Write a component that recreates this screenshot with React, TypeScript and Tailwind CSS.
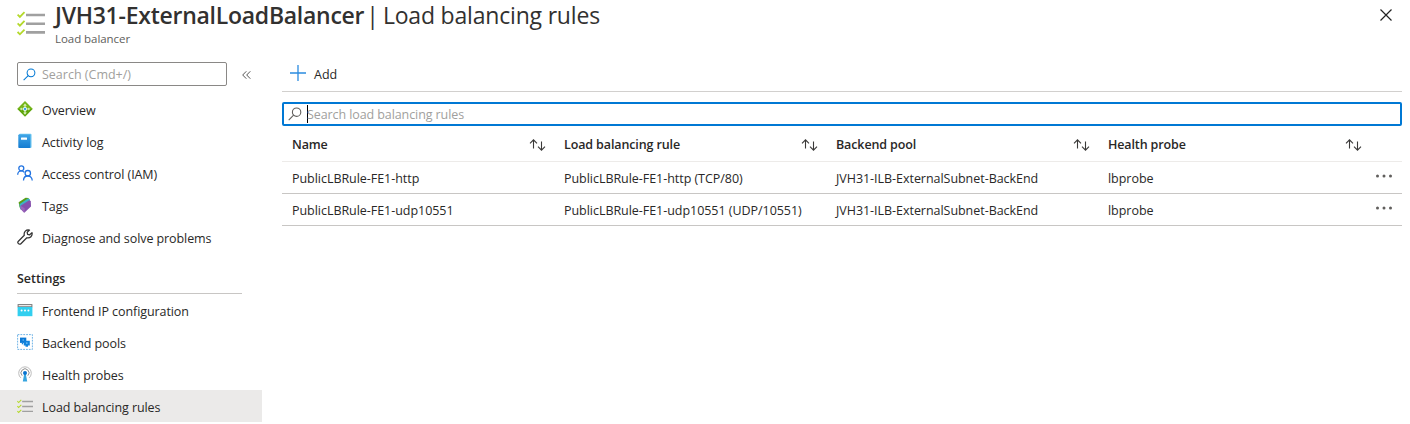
import React from "react";

type IconProps = { className?: string };

function RulesIcon({ className = "size-4" }: IconProps) {
  return (
    <svg className={className} viewBox="0 0 28 28" fill="none">
      <path d="M9 6h19M9 14.700h19M9 23.400h19" stroke="#a0a0a0" strokeWidth="2.600" />
      <path d="M.6 5.600l2.300 2.300L7.500 3.200M.6 14.300l2.300 2.300 4.600-4.700M.6 23l2.300 2.300 4.600-4.700" stroke="#b4d92b" strokeWidth="1.800" />
    </svg>
  );
}

function OverviewIcon() {
  return (
    <svg className="size-4" viewBox="0 0 16 16">
      <path d="M8 .3 15.700 8 8 15.700.3 8z" fill="#5ea50b" />
      <path d="M8 .3 15.700 8H.3z" fill="#76b71b" />
      <path d="M8 2.400 9.900 4.700H8.600v2h-1.200v-2H6.100zM2.800 8l1.900-1.500v1h2v1h-2v1zM13.200 8l-1.900-1.500v1h-2v1h2v1zM7.300 9h1.400v2.500h1.200L8 13.700l-1.900-2.200h1.200z" fill="#d8efb8" />
      <circle cx="8" cy="8" r="2.100" fill="#fff" />
      <circle cx="8" cy="8" r="1.300" fill="#3ea6e8" />
    </svg>
  );
}

function LogIcon() {
  return (
    <svg className="size-4" viewBox="0 0 16 16">
      <defs>
        <linearGradient id="log" x2="0" y2="1">
          <stop stopColor="#3fa5e7" />
          <stop offset="1" stopColor="#157cd1" />
        </linearGradient>
      </defs>
      <rect x="2" y=".7" width="12.500" height="14.300" rx="1" fill="#69c4ef" />
      <rect x="1.300" y="1.400" width="12" height="13.600" rx=".8" fill="url(#log)" />
      <rect x="4" y="4.600" width="6" height="2.200" rx=".3" fill="#fff" />
    </svg>
  );
}

function AccessIcon() {
  return (
    <svg className="size-4" viewBox="0 0 16 16" fill="none" stroke="#2374e1" strokeWidth="1.300">
      <circle cx="4.300" cy="3.300" r="2.500" />
      <path d="M.7 9.700c0-2.300 1.600-3.800 3.600-3.800 1.300 0 2.300.6 3 1.500" />
      <circle cx="10.800" cy="8.200" r="2.700" />
      <path d="M6.500 15.500c0-2.600 1.800-4.500 4.300-4.500s4.400 1.900 4.400 4.500" />
    </svg>
  );
}

function TagIcon() {
  return (
    <svg className="size-4" viewBox="0 0 16 16">
      <path d="M1.600 5.300 8.600.7l3 .4.400 5-7 5-2.400-.6z" fill="#5a9e16" />
      <path d="m2.400 7.300 8.400-5.700 2 .5.200 6-7 5.400-2.800-1.300z" fill="#3cb4c4" />
      <path d="m3.600 8.800 8.600-5.600 1.600.8.200 5.600-6.400 5.900-.9-.2-3-3.300z" fill="#8650ad" />
      <path d="m3.600 8.800 4 2.400v4.300l-.9-.2-3-3.300z" fill="#9b65bb" />
    </svg>
  );
}

function WrenchIcon() {
  return (
    <svg className="size-4" viewBox="0 0 16 16" fill="none" stroke="#333" strokeWidth="1.250" strokeLinejoin="round">
      <path d="M12.500 1 10.200 3.300l.4 2 2.100.5L15 3.600c.8 3.300-1.900 6-5.200 5.200L3.900 14.700c-1.600 1.600-4.100-.9-2.500-2.500L7.300 6.300C6.500 3 9.100.2 12.500 1z" />
    </svg>
  );
}

function FrontendIcon() {
  return (
    <svg className="size-4" viewBox="0 0 16 16">
      <path d="M.6 2.100h14.800v3.200H.6z" fill="#777" />
      <path d="M1.600 3h12.800v1.300H1.600z" fill="#e9e9e9" />
      <path d="M.6 5h14.800v9.200H.6z" fill="#32cfef" />
      <g fill="#fff">
        <circle cx="4.600" cy="8.500" r="1" />
        <circle cx="8" cy="8.500" r="1" />
        <circle cx="11.400" cy="8.500" r="1" />
      </g>
    </svg>
  );
}

function PoolIcon() {
  return (
    <svg className="size-4" viewBox="0 0 16 16">
      <rect x=".6" y=".6" width="14.800" height="14.800" fill="#fff" stroke="#4a9fe0" strokeWidth=".8" strokeDasharray="1.800 1.050" />
      <path d="M3 3.600h6.300v5.300H3z" fill="#0b78d4" />
      <path d="M6.800 6.800h6v4.700h-6zM8.500 11.500H11v1.300H8.500z" fill="#1183dd" />
      <path d="M4.800 8.900h1.400v1.400H4.800z" fill="#1183dd" />
      <circle cx="6.200" cy="6" r=".8" fill="#6dbcf2" />
      <circle cx="9.800" cy="9.100" r=".9" fill="#6dbcf2" />
    </svg>
  );
}

function ProbeIcon() {
  return (
    <svg className="size-4" viewBox="0 0 16 16" fill="none">
      <path d="M4 12a6.300 6.300 0 1 1 8 0" stroke="#bdbdbd" strokeWidth="1" />
      <path d="M5.200 9.700a4 4 0 1 1 5.600 0" stroke="#8f8f8f" strokeWidth="1" />
      <path d="m7.200 8h1.600l1.400 7.400H5.800z" fill="#37a5df" />
      <circle cx="8" cy="7" r="2" fill="#0873cf" />
    </svg>
  );
}

function SearchIcon({ className }: IconProps) {
  return (
    <svg className={className} viewBox="0 0 14 14" fill="none" stroke="currentColor" strokeWidth="1.100">
      <circle cx="8.600" cy="5.200" r="4.200" />
      <path d="M5.600 8.200.7 13.100" />
    </svg>
  );
}

function SortIcon() {
  return (
    <svg className="h-3 w-[17px]" viewBox="0 0 17 12" fill="none" stroke="#3b3a39" strokeWidth="1.100">
      <path d="M4.500 9.500V.8M1 4.300 4.500.8 8 4.300M12.500 2.500v8.700M9 7.700l3.500 3.500L16 7.700" />
    </svg>
  );
}

function NavItem({ icon, label, active }: { icon: React.ReactNode; label: string; active?: boolean }) {
  return (
    <li className={active ? "flex h-8 items-center gap-[9px] bg-[#ebeae9] pl-[17px]" : "flex h-8 items-center gap-[9px] pl-[17px]"}>
      {icon}
      <span className="pt-[3px] tracking-[-0.08px]">{label}</span>
    </li>
  );
}

const columns = ["Name", "Load balancing rule", "Backend pool", "Health probe"];

const rows = [
  ["PublicLBRule-FE1-http", "PublicLBRule-FE1-http (TCP/80)", "JVH31-ILB-ExternalSubnet-BackEnd", "lbprobe"],
  ["PublicLBRule-FE1-udp10551", "PublicLBRule-FE1-udp10551 (UDP/10551)", "JVH31-ILB-ExternalSubnet-BackEnd", "lbprobe"],
];

export default function App() {
  return (
    <div className="h-[424px] w-[1410px] overflow-hidden bg-white font-['Open_Sans',sans-serif] text-[12.5px] leading-4 whitespace-nowrap text-[#292827]">
      <header className="flex h-[62px] items-start pl-[17px]">
        <RulesIcon className="mt-[9px] size-7" />
        <div className="ml-[10px]">
          <h1 className="flex h-[30px] items-center text-[23px] leading-[30px] text-[#323130]">
            <span className="font-semibold tracking-[-0.260px]">JVH31-ExternalLoadBalancer</span>
            <span className="ml-[2px]">|</span>
            <span className="ml-[4px] tracking-[-0.190px]">Load balancing rules</span>
          </h1>
          <p className="mt-px text-[11.5px] tracking-[-0.05px] text-[#605e5c]">Load balancer</p>
        </div>
        <svg className="mt-[9px] mr-[18px] ml-auto size-3" viewBox="0 0 12 12" stroke="#222" strokeWidth="1.200">
          <path d="m.5.5 11 11m0-11-11 11" />
        </svg>
      </header>
      <div className="flex">
        <aside className="w-[262px]">
          <div className="flex h-[31px] items-start pl-[17px]">
            <div className="flex h-6 w-[210px] items-center rounded-[2px] border border-[#8a8886] pl-[5px] text-[#a19f9d]">
              <SearchIcon className="size-[13px] text-[#0078d4]" />
              <span className="ml-[6px] pt-[2px]">Search (Cmd+/)</span>
            </div>
            <svg className="mt-[9px] ml-[15px] h-2 w-[9px]" viewBox="0 0 9 8" fill="none" stroke="#555" strokeWidth="1">
              <path d="M4.300.3.700 4l3.600 3.700M8.300.3 4.700 4l3.600 3.700" />
            </svg>
          </div>
          <ul>
            <NavItem icon={<OverviewIcon />} label="Overview" />
            <NavItem icon={<LogIcon />} label="Activity log" />
            <NavItem icon={<AccessIcon />} label="Access control (IAM)" />
            <NavItem icon={<TagIcon />} label="Tags" />
            <NavItem icon={<WrenchIcon />} label="Diagnose and solve problems" />
          </ul>
          <h2 className="mr-5 ml-[17px] flex h-[41px] items-end border-b border-[#c8c6c4] pb-[6px] font-semibold">Settings</h2>
          <ul>
            <NavItem icon={<FrontendIcon />} label="Frontend IP configuration" />
            <NavItem icon={<PoolIcon />} label="Backend pools" />
            <NavItem icon={<ProbeIcon />} label="Health probes" />
            <NavItem icon={<RulesIcon />} label="Load balancing rules" active />
          </ul>
        </aside>
        <main className="ml-5 w-[1120px]">
          <div className="flex h-[30px] items-start border-b border-[#d2d0ce] pt-1 pl-2">
            <svg className="-mt-px size-4" viewBox="0 0 16 16" stroke="#2b8ce0" strokeWidth="1.300">
              <path d="M8 0v16M0 8h16" />
            </svg>
            <span className="mt-px ml-2">Add</span>
          </div>
          <div className="mt-[10px] flex h-6 items-center rounded-[2px] border-2 border-[#0078d4] pl-1 text-[#a19f9d]">
            <SearchIcon className="size-[14px] text-[#605e5c]" />
            <span className="ml-[5px] h-[18px] w-px bg-black" />
            <span className="-ml-px pt-[2px] tracking-[-0.090px]">Search load balancing rules</span>
          </div>
          <div className="flex h-9 items-center border-b border-[#edebe9] font-semibold">
            {columns.map((label) => (
              <div key={label} className="flex w-[272px] items-center justify-between pt-[2px] pr-2 pl-[10px]">
                <span className="tracking-[-0.12px]">{label}</span>
                <SortIcon />
              </div>
            ))}
          </div>
          {rows.map((r) => (
            <div key={r[0]} className="flex h-8 items-center border-b border-[#c8c6c4]">
              {r.map((c, i) => (
                <span key={i} className="w-[272px] pt-[3px] pl-[10px] tracking-[-0.040px]">{c}</span>
              ))}
              <svg className="-mt-[3px] ml-[5px] h-1 w-[18px]" viewBox="0 0 18 4" fill="#605e5c">
                <circle cx="2.500" cy="2" r="1.500" />
                <circle cx="9" cy="2" r="1.500" />
                <circle cx="15.500" cy="2" r="1.500" />
              </svg>
            </div>
          ))}
        </main>
      </div>
    </div>
  );
}
